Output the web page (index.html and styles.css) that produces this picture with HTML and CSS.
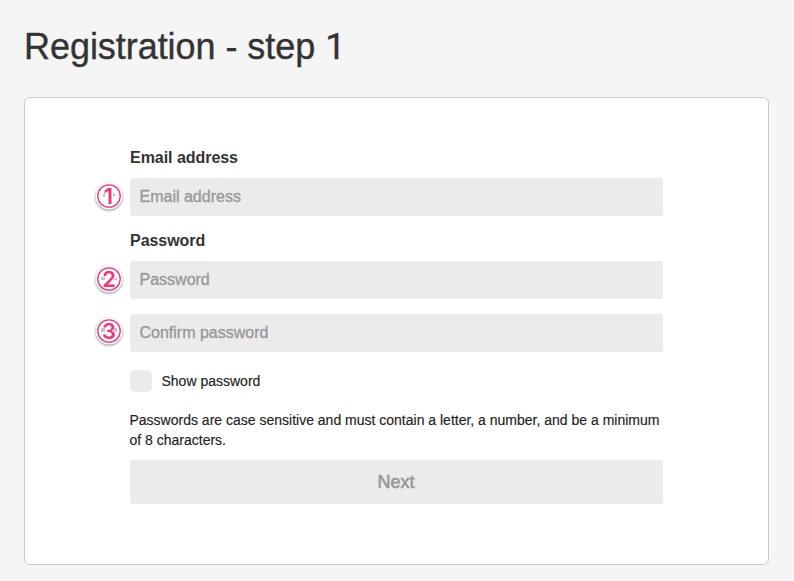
FILE: index.html
```html
<!DOCTYPE html>
<html lang="en">
<head>
<meta charset="utf-8">
<title>Registration</title>
<link rel="stylesheet" href="styles.css">
</head>
<body>
<h1>Registration - step <span class="numeral">1</span></h1>
<main class="card">
<form class="form">
<label class="label" for="email">Email address</label>
<div class="field"><svg class="badge" viewBox="0 0 32 34"><circle class="disc" cx="16" cy="16" r="13.5"/><path class="mark" d="M9 16l3-4v5zM20 12l3 4h-3z"/><circle class="ring" cx="16" cy="16" r="11.2"/><text x="15.5" y="24">1</text></svg><input id="email" type="email" placeholder="Email address"></div>
<label class="label second" for="pass">Password</label>
<div class="field"><svg class="badge" viewBox="0 0 32 34"><circle class="disc" cx="16" cy="16" r="13.5"/><path class="mark" d="M8 14h4v3H8zM20 17l4-3v3z"/><circle class="ring" cx="16" cy="16" r="11.2"/><text x="16" y="24">2</text></svg><input id="pass" type="password" placeholder="Password"></div>
<div class="field confirm"><svg class="badge" viewBox="0 0 32 34"><circle class="disc" cx="16" cy="16" r="13.5"/><path class="mark" d="M8 13h4v4H8zM21 13h3v4h-3z"/><circle class="ring" cx="16" cy="16" r="11.2"/><text x="16" y="24">3</text></svg><input type="password" placeholder="Confirm password"></div>
<label class="check"><span class="box"></span>Show password</label>
<p class="hint">Passwords are case sensitive and must contain a letter, a number, and be a minimum<br>of 8 characters.</p>
<button type="button" class="next">Next</button>
</form>
</main>
</body>
</html>
```
FILE: styles.css
```css
* { box-sizing: border-box; }
body { margin: 0; height: 581px; padding: 24px 25px 16px 24px; background: #f5f5f5; color: #333; font-family: "Liberation Sans", Arial, sans-serif; }
h1 { margin: 0; height: 73px; padding-top: 1px; font-size: 36px; line-height: 44px; font-weight: 400; letter-spacing: -0.05px; white-space: nowrap; -webkit-text-stroke: 0.35px #333; }
.numeral { font-family: Roboto, sans-serif; }
.card { height: 468px; border: 1px solid #ccc; border-radius: 6px; background: #fff; padding: 49px 105px 0; }
.form { width: 533px; }
.label { display: block; height: 31px; line-height: 22px; font-size: 16px; font-weight: 700; letter-spacing: -0.04px; }
.second { margin-top: 14px; }
.field { position: relative; height: 38px; }
.confirm { margin-top: 15px; }
input { display: block; width: 100%; height: 38px; padding: 0 9.5px; border: 0; border-radius: 3px; background: #ebebeb; font: 16px "Liberation Sans", Arial, sans-serif; }
input::placeholder { color: #999; opacity: 1; -webkit-text-stroke: 0.35px #999; }
.badge { position: absolute; left: -37px; top: 2px; width: 32px; height: 34px; overflow: visible; }
.confirm .badge { top: 1px; }
.disc { fill: #fff; filter: drop-shadow(0 1px 1px rgba(0, 0, 0, .45)); }
.ring { fill: none; stroke: #fb2f74; stroke-width: 1.3; }
.mark { fill: #c4c4c4; }
.badge text { fill: #fb2f74; font: 600 22px Inter, sans-serif; text-anchor: middle; }
.check { display: flex; align-items: center; gap: 9.5px; height: 22px; margin-top: 18px; font-size: 14px; color: #222; -webkit-text-stroke: 0.15px #222; }
.box { width: 22px; height: 22px; border-radius: 5px; background: #ebebeb; }
.hint { margin: 18px 0 10px -0.5px; font-size: 14px; line-height: 20px; white-space: nowrap; color: #222; -webkit-text-stroke: 0.15px #222; }
.next { display: block; width: 100%; height: 44px; padding: 0 1px 0 0; border: 0; border-radius: 3px; background: #ebebeb; color: #999; font: 18px "Liberation Sans", Arial, sans-serif; -webkit-text-stroke: 0.6px #999; }
```
